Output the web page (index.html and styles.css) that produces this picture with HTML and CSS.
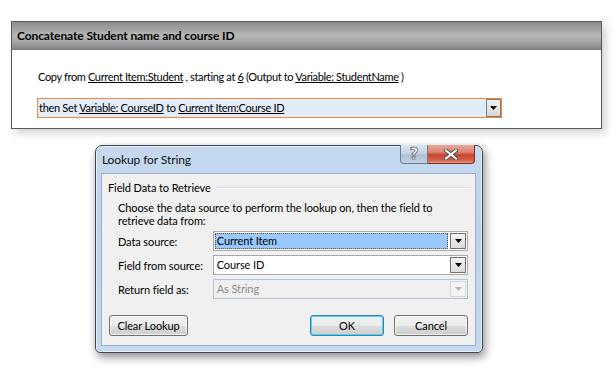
FILE: index.html
```html
<!DOCTYPE html>
<html>
<head>
<meta charset="utf-8">
<link rel="stylesheet" href="styles.css">
</head>
<body>
<div class="page">
  <section class="action">
    <header class="action-head"><span class="action-title">Concatenate Student name and course ID</span></header>
    <div class="action-body">
      <p class="sentence">Copy from <u>Current Item:Student</u> , starting at <u>6</u> (Output to <u>Variable: StudentName</u> )</p>
      <div class="sentence-row">
        <span class="sentence-text">then Set <u>Variable: CourseID</u> to <u>Current Item:Course ID</u></span>
        <span class="drop-btn"><svg width="7" height="4" viewBox="0 0 7 4"><path d="M0 0h7L3.5 4z" fill="#000"/></svg></span>
      </div>
    </div>
  </section>

  <div class="dialog">
    <div class="titlebar">
      <span class="dlg-title">Lookup for String</span>
      <div class="caption-btns">
        <span class="cap help">?</span>
        <span class="cap close"><svg width="14" height="11" viewBox="0 0 14 11"><path d="M2 1.5L12 9.5M12 1.5L2 9.5" stroke="#4a4a4a" stroke-width="4" stroke-linecap="square"/><path d="M2 1.5L12 9.5M12 1.5L2 9.5" stroke="#fff" stroke-width="2" stroke-linecap="square"/></svg></span>
      </div>
    </div>
    <div class="client">
      <div class="group-head"><span>Field Data to Retrieve</span><span class="group-line"></span></div>
      <p class="desc">Choose the data source to perform the lookup on, then the field to retrieve data from:</p>
      <div class="rows">
        <div class="row">
          <span class="lbl">Data source:</span>
          <div class="combo">
            <span class="combo-val selected">Current Item</span>
            <span class="combo-btn"><svg width="7" height="4" viewBox="0 0 7 4"><path d="M0 0h7L3.5 4z" fill="#000"/></svg></span>
          </div>
        </div>
        <div class="row">
          <span class="lbl">Field from source:</span>
          <div class="combo">
            <span class="combo-val">Course ID</span>
            <span class="combo-btn"><svg width="7" height="4" viewBox="0 0 7 4"><path d="M0 0h7L3.5 4z" fill="#000"/></svg></span>
          </div>
        </div>
        <div class="row">
          <span class="lbl">Return field as:</span>
          <div class="combo disabled">
            <span class="combo-val">As String</span>
            <span class="combo-btn"><svg width="7" height="4" viewBox="0 0 7 4"><path d="M0 0h7L3.5 4z" fill="#b4b4b4"/></svg></span>
          </div>
        </div>
      </div>
      <div class="buttons">
        <span class="btn clear">Clear Lookup</span>
        <span class="spacer"></span>
        <span class="btn default">OK</span>
        <span class="btn cancel">Cancel</span>
      </div>
    </div>
  </div>
</div>
</body>
</html>
```

FILE: styles.css
```css
* { box-sizing: border-box; }
html, body { margin: 0; padding: 0; background: #fff; }
body {
  font-family: Lato, "Open Sans", sans-serif;
  font-size: 11px;
  letter-spacing: -0.1px;
  color: #000;
  width: 616px;
  height: 380px;
  overflow: hidden;
}
.page { padding: 21px 0 0 11px; }

.action {
  width: 591px;
  height: 108px;
  border: 1px solid #5a5a5a;
  background: #fff;
  box-shadow: 4px 4px 8px rgba(0,0,0,0.18);
}
.action-head {
  height: 28px;
  display: flex;
  align-items: center;
  padding-left: 5px;
  background: linear-gradient(#8d8d8d 0%, #a4a4a4 30%, #b9b9b9 50%, #a2a2a2 75%, #868686 100%);
  border-bottom: 1px solid #7a7a7a;
}
.action-title {
  font-weight: bold;
  font-size: 12px;
  letter-spacing: -0.1px;
}
.action-body { padding: 19px 0 0 25px; }
.sentence { margin: 0; height: 16px; line-height: 16px; padding-left: 1px; letter-spacing: -0.35px; }
.sentence-row {
  margin-top: 13px;
  width: 465px;
  height: 20px;
  border: 1px solid #f0883a;
  background: #e2edfb;
  display: flex;
  align-items: center;
  justify-content: space-between;
  padding-left: 1px;
  letter-spacing: -0.3px;
}
.sentence-text { line-height: 16px; }
.drop-btn {
  width: 15px;
  height: 18px;
  border: 1px solid #7d7d7d;
  background: linear-gradient(#f2f2f2, #d6d6d6);
  display: flex;
  align-items: center;
  justify-content: center;
}

.dialog {
  margin: 16px 0 0 84px;
  width: 388px;
  height: 208px;
  border: 1px solid #3b4756;
  border-radius: 7px 7px 5px 5px;
  background: linear-gradient(#c6d9ef 0%, #bcd2ec 40%, #c5d9f0 100%);
  box-shadow: 2px 4px 10px rgba(0,0,0,0.45), inset 0 0 0 1px rgba(255,255,255,0.6);
  padding: 0 6px 6px 5px;
  display: flex;
  flex-direction: column;
}
.titlebar {
  height: 27px;
  display: flex;
  align-items: flex-start;
  justify-content: space-between;
}
.dlg-title { padding: 6px 0 0 1px; font-size: 12px; color: #101010; }
.caption-btns { display: flex; margin-top: -1px; margin-right: 1px; }
.cap {
  height: 19px;
  display: flex;
  align-items: center;
  justify-content: center;
  border: 1px solid #6b7c93;
  border-top: none;
}
.help {
  width: 28px;
  border-radius: 0 0 0 4px;
  background: linear-gradient(#dbe5f1 0%, #c8d5e5 45%, #aebfd5 55%, #c3d2e3 100%);
  font-family: "DejaVu Sans", sans-serif;
  font-weight: bold;
  font-size: 15px;
  line-height: 15px;
  color: #fff;
  -webkit-text-stroke: 0.6px #333;
}
.close {
  width: 47px;
  border-left: none;
  border-radius: 0 0 4px 0;
  border-color: #7b2b22;
  background: linear-gradient(#e9a99b 0%, #db8271 40%, #c74631 55%, #d4624b 85%, #e39a85 100%);
}
.client {
  flex: 1;
  background: #f0f0f0;
  border: 1px solid #9fb1c7;
  padding: 6px 7px 0 6px;
}
.group-head { display: flex; align-items: center; height: 15px; }
.group-line {
  flex: 1;
  height: 2px;
  margin-left: 5px;
  border-top: 1px solid #d5dfe5;
  border-bottom: 1px solid #fff;
}
.desc {
  margin: 6px 0 0 10px;
  width: 335px;
  line-height: 13px;
}
.rows { margin-top: 2px; padding-left: 10px; }
.row { display: flex; align-items: center; height: 24px; }
.lbl { width: 95px; }
.combo {
  width: 256px;
  height: 20px;
  border: 1px solid #a9a9a9;
  background: #fff;
  display: flex;
  align-items: center;
  padding: 1px;
}
.combo-val {
  flex: 1;
  height: 16px;
  line-height: 15px;
  padding-left: 2px;
}
.combo-val.selected {
  background: #99c9ff;
  outline: 1px dotted #5a4a2a;
  outline-offset: -1px;
}
.combo-btn {
  width: 16px;
  height: 16px;
  margin-left: 2px;
  border: 1px solid #707070;
  background: linear-gradient(#f4f4f4, #dcdcdc);
  display: flex;
  align-items: center;
  justify-content: center;
}
.combo.disabled { background: #f0f0f0; border-color: #afc3da; color: #8c8c8c; }
.combo.disabled .combo-btn { border-color: #d8d8d8; background: #f4f4f4; }

.buttons { display: flex; margin-top: 14px; padding-left: 1px; }
.spacer { flex: 1; }
.btn {
  height: 21px;
  border: 1px solid #707070;
  border-radius: 3px;
  background: linear-gradient(#f2f2f2 0%, #ebebeb 50%, #dddddd 51%, #cfcfcf 100%);
  display: flex;
  align-items: center;
  justify-content: center;
  white-space: nowrap;
  box-shadow: inset 0 0 0 1px rgba(255,255,255,0.7);
}
.btn.clear { width: 79px; }
.btn.default { width: 74px; border-color: #3c7fb1; box-shadow: inset 0 0 0 1px #48d7fb; margin-right: 10px; }
.btn.cancel { width: 74px; }
```
